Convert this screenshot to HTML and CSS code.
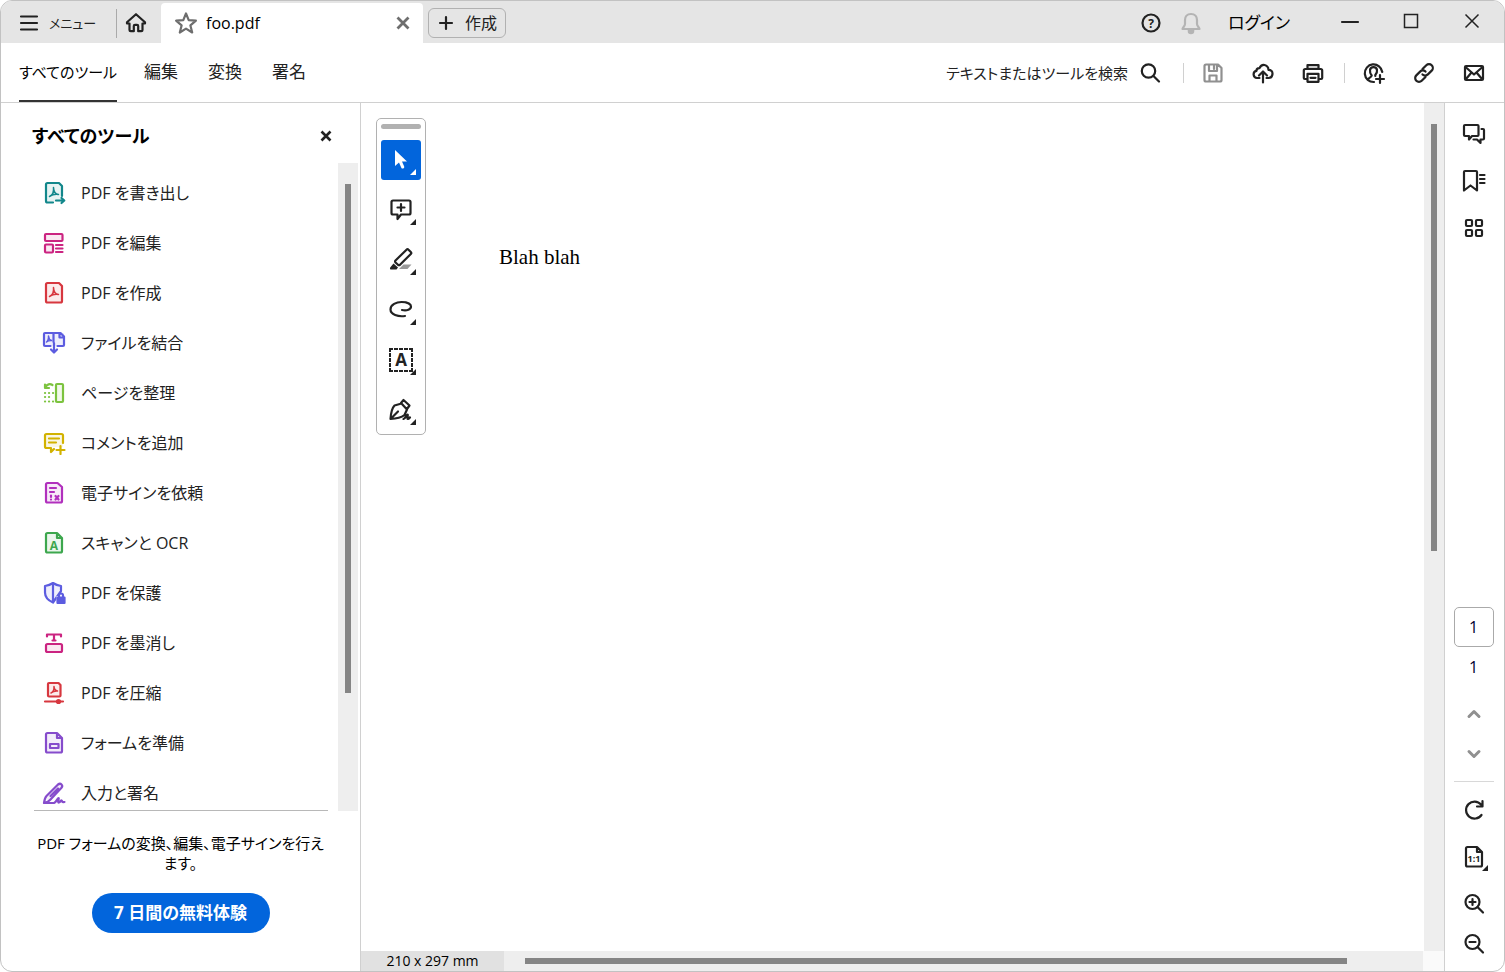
FILE: index.html
```html
<!DOCTYPE html>
<html lang="ja">
<head>
<meta charset="utf-8">
<title>foo.pdf</title>
<link rel="stylesheet" href="styles.css">
</head>
<body>
<div class="window">
  <header class="titlebar">
    <button class="menu-btn"><svg class="ico" viewBox="0 0 24 24"><path d="M4 5.500h16M4 12h16M4 18.500h16"/></svg>メニュー</button>
    <span class="tab-divider"></span>
    <button class="home-btn" aria-label="ホーム"><svg class="ico" viewBox="0 0 24 24"><path d="M12 3.200 3 11.200v1.300h2.500V19q0 1.200 1.200 1.200H9.800v-5.200q0-1.200 1.200-1.200h2q1.200 0 1.200 1.200v5.200h3.100q1.200 0 1.200-1.200v-6.500H21v-1.300z"/></svg></button>
    <div class="doc-tab">
      <svg class="ico star" viewBox="0 0 24 24"><path d="m12 2.500 2.700 6.700 7.200.5-5.500 4.700 1.800 7.100L12 17.600l-6.200 3.900 1.800-7.100-5.500-4.700 7.200-.5z"/></svg>
      <span class="doc-name">foo.pdf</span>
      <button aria-label="タブを閉じる"><svg class="ico tab-x" viewBox="0 0 24 24"><path d="m6.500 6.500 11 11m0-11-11 11"/></svg></button>
    </div>
    <button class="create-btn"><svg class="ico" viewBox="0 0 24 24"><path d="M12 6v12M6 12h12"/></svg>作成</button>
    <div class="title-right">
      <button aria-label="ヘルプ"><svg class="ico" viewBox="0 0 24 24"><circle cx="12" cy="12" r="8.500"/><text x="12" y="16.500" font-size="12">?</text></svg></button>
      <button aria-label="通知"><svg class="ico bell" viewBox="0 0 24 24"><path d="M12 3c-4 0-6 2.800-6 6v4c0 2-2 3-2.500 5h17c-.5-2-2.500-3-2.500-5V9c0-3.200-2-6-6-6z"/><path d="M9.800 19v1a2.200 2.200 0 0 0 4.400 0v-1z" class="fill"/></svg></button>
      <button class="login">ログイン</button>
    </div>
    <div class="win-controls">
      <button aria-label="最小化"><svg class="ico" viewBox="0 0 24 24"><path d="M4 13h16"/></svg></button>
      <button aria-label="最大化"><svg class="ico thin" viewBox="0 0 24 24"><path d="M5.500 5.500h13v13h-13z"/></svg></button>
      <button aria-label="閉じる"><svg class="ico thin" viewBox="0 0 24 24"><path d="m5.500 5.500 13 13m0-13-13 13"/></svg></button>
    </div>
  </header>

  <div class="toolbar">
    <nav class="modes">
      <button class="mode active">すべてのツール</button>
      <button class="mode">編集</button>
      <button class="mode">変換</button>
      <button class="mode">署名</button>
    </nav>
    <div class="actions">
      <button class="search">テキストまたはツールを検索<svg class="ico" viewBox="0 0 24 24"><circle cx="10.500" cy="10" r="6.700"/><path d="m15.500 15 5.500 5.500"/></svg></button>
      <span class="action-divider"></span>
      <button class="disabled" aria-label="保存" disabled><svg class="ico" viewBox="0 0 24 24"><path d="M5 3.500h12l3.500 3.500v12q0 1.500-1.500 1.500H5q-1.500 0-1.500-1.500V5q0-1.500 1.500-1.500zM8 4v6h8V4M8.500 20v-5.500h7V20M13 5v3"/></svg></button>
      <button aria-label="クラウドにアップロード"><svg class="ico" viewBox="0 0 24 24"><path d="M8.500 17H6a3.600 3.600 0 0 1-.6-7.100Q5.600 7 8.500 7.200 10 3.500 13.500 4q3.700.8 4 4.800 4.200.2 4 4.200Q21 17 17.500 17h-2M12 21.500V11M8 14.500l4-4 4 4"/></svg></button>
      <button aria-label="印刷"><svg class="ico" viewBox="0 0 24 24"><path class="shade" d="M7 4h10v4H7z"/><path d="M6.500 18H3.800q-1 0-1-1V9.500q0-1.500 1.500-1.500h15.400q1.500 0 1.500 1.500V17q0 1-1 1h-2.700M6.500 8V4h11v4M6.500 12.800h11v8h-11zM9.500 16.800h5"/></svg></button>
      <span class="action-divider"></span>
      <button aria-label="共有"><svg class="ico" viewBox="0 0 24 24"><path d="M20.300 11a8.800 8.800 0 1 0-8.300 10M6 18.500c.5-2 3.500-1.800 3.700-4C7 11 7.300 6.200 11.500 6.200S16 11 13.300 14v1M18 14v8M14 18h8"/></svg></button>
      <button aria-label="リンク"><svg class="ico" viewBox="0 0 24 24"><path d="m10.500 8 3.800-3.800a3.800 3.800 0 0 1 5.400 5.400l-3.800 3.800a3.800 3.800 0 0 1-5.400 0M13.500 16l-3.800 3.800a3.800 3.800 0 0 1-5.400-5.400l3.800-3.800a3.800 3.800 0 0 1 5.400 0"/></svg></button>
      <button aria-label="メール"><svg class="ico" viewBox="0 0 24 24"><path d="M4 5h16q1 0 1 1v12q0 1-1 1H4q-1 0-1-1V6q0-1 1-1zM3.500 6l8.500 7.500L20.500 6M4 18l5.500-6.500M20 18l-5.500-6.500"/></svg></button>
    </div>
  </div>

  <div class="workspace">
    <aside class="sidebar">
      <div class="side-head"><h2>すべてのツール</h2><button aria-label="パネルを閉じる"><svg class="ico panel-x" viewBox="0 0 24 24"><path d="m7.500 7.500 9 9m0-9-9 9"/></svg></button></div>
      <div class="side-scroll">
        <ul class="tools">
          <li><button class="teal"><svg class="ico" viewBox="0 0 24 24"><path class="tint" d="M4 2h13l3 3v16H4z"/><path d="M11 21.500H5.500Q4 21.500 4 20V3.500Q4 2 5.500 2H17l3 3v10M14 19.500h8M19.500 17l2.800 2.500-2.800 2.500"/><path class="fine" d="M11.500 6.500c.2 4 2 6.500 5 7M7.500 15.500c3-1.200 4.500-4 4-9M7.500 15.500c3-2 6-2.500 9-2"/></svg>PDF を書き出し</button></li>
          <li><button class="pink"><svg class="ico" viewBox="0 0 24 24"><path class="tint" d="M3 3h18v7H3zM3 13h8v9H3z"/><rect x="3" y="3" width="17.500" height="7" rx="1"/><rect x="3" y="13.500" width="8" height="8" rx="1"/><path d="M14 14h6.500M14 17.500h6.500M14 21h6.500"/></svg>PDF を編集</button></li>
          <li><button class="red"><svg class="ico" viewBox="0 0 24 24"><path class="tint" d="M4 2h13l3 3v16H4z"/><path d="M5.500 2H17l3 3v15q0 1.500-1.500 1.500h-13Q4 21.500 4 20V3.500Q4 2 5.500 2z"/><path class="fine" d="M11.500 6.500c.2 4 2 6.500 5 7M7.500 15.500c3-1.200 4.500-4 4-9M7.500 15.500c3-2 6-2.500 9-2"/></svg>PDF を作成</button></li>
          <li><button class="indigo"><svg class="ico" viewBox="0 0 24 24"><path class="tint" d="M2 2h20v13H2z"/><path d="M8.500 15H3q-1 0-1-1V3q0-1 1-1h8.500v9M15.500 15H21q1 0 1-1V5.500L18.500 2h-6M17.500 2.500v4H22M12 12v9M9 18.500l3 3 3-3"/><path class="fine" d="M6.500 5c.2 2.500 1.300 4 3 4.500M4.500 11c1.500-1 2.200-3 2-6M4.500 11c1.500-1.300 3-1.600 5-1.500"/></svg>ファイルを結合</button></li>
          <li><button class="lime"><svg class="ico" viewBox="0 0 24 24"><rect class="tint" x="14" y="3" width="7" height="18"/><rect x="14" y="3" width="7" height="18" rx="1"/><path d="M3 3.500V7h4M3 6.500c2-3.500 5-4 7.500-2.500"/><path class="dots" d="M3 12h8.100M3 16h4.100M3 20.500h8.100"/></svg>ページを整理</button></li>
          <li><button class="gold"><svg class="ico" viewBox="0 0 24 24"><path class="tint" d="M3 3h18v13H3z"/><path d="M12 18 9 21v-4H4.500Q3 17 3 15.500v-11Q3 3 4.500 3h15Q21 3 21 4.500V12M7 7.500h10M7 11.500h7M18.500 15v8M14.500 19h8"/></svg>コメントを追加</button></li>
          <li><button class="purple"><svg class="ico" viewBox="0 0 24 24"><path class="tint" d="M4 2h12l4 4v15H4z"/><path d="M5.500 2H15.500L20 6v14q0 1.500-1.500 1.500h-13Q4 21.500 4 20V3.500Q4 2 5.500 2zM8 7h6M8 11h4M9 14.500V16M9 18.500v.1M13.500 15l3 3.500m0-3.500-3 3.500"/></svg>電子サインを依頼</button></li>
          <li><button class="green"><svg class="ico" viewBox="0 0 24 24"><path class="tint" d="M4 2h11l5 5v14H4z"/><path d="M5.500 2H15l5 5v13q0 1.500-1.500 1.500h-13Q4 21.500 4 20V3.500Q4 2 5.500 2zM15 2v5h5"/><text x="12" y="18.500" font-size="12">A</text></svg>スキャンと OCR</button></li>
          <li><button class="indigo"><svg class="ico" viewBox="0 0 24 24"><path class="tint" d="m11 2 8 3v8l-8 8-8-8V5z"/><path d="M19 10V5Q14.500 4.500 11 2 7.500 4.500 3 5v6.500q0 6.500 8 10zM11 2v19.500"/><path class="halo" d="M14.500 15h9v8h-9z"/><path class="fill" d="M15.500 16.500h7v5.500h-7z"/><path d="M17 16v-1.500a2 2 0 0 1 4 0V16"/></svg>PDF を保護</button></li>
          <li><button class="pink"><svg class="ico" viewBox="0 0 24 24"><path class="tint" d="M4 13h16v8H4z"/><rect x="4" y="13" width="16" height="8" rx="1.500"/><path d="M5 5.500v-2h14v2M12 3.500V9.500M10.500 9.500h3"/></svg>PDF を墨消し</button></li>
          <li><button class="red"><svg class="ico" viewBox="0 0 24 24"><path class="tint" d="M6 1.500h12V16H6z"/><path d="M7 2h9.500l2 2v10.500q0 1-1 1H7q-1 0-1-1V3q0-1 1-1zM3 20.500h18"/><circle class="fill" cx="16.500" cy="20.500" r="1.500"/><path class="fine" d="M12 5.500c.2 2.500 1.300 4 3.500 4.500M9 12c2-1 3.200-3 3-6.500M9 12c2-1.700 4-2.200 6.500-2"/></svg>PDF を圧縮</button></li>
          <li><button class="violet"><svg class="ico" viewBox="0 0 24 24"><path class="tint" d="M4 2h11l5 5v14H4z"/><path d="M5.500 2H15l5 5v13q0 1.500-1.500 1.500h-13Q4 21.500 4 20V3.500Q4 2 5.500 2zM15 2v5h5M8 13h8.500v4H8z"/></svg>フォームを準備</button></li>
          <li><button class="violet"><svg class="ico" viewBox="0 0 24 24"><path class="tint" d="M3 19 17 3l3 3L9 18z"/><path d="M2 22c.5-4 1-5.500 2.500-7L16 3.500q2-1.500 3.500 0t0 3.300L8.500 18.500Q6.500 21 2 22zM8.500 15 16 7.500M2.500 22H12c2.500-1 3.500-5 4.500-5s-1.500 5 .5 4.500 1.500-2.500 2.500-2 0 2 3 1.500"/></svg>入力と署名</button></li>
        </ul>
        <div class="v-track side-track"><div class="thumb"></div></div>
      </div>
      <div class="side-foot">
        <p>PDF フォームの変換、編集、電子サインを行え<br>ます。</p>
        <button class="trial">7 日間の無料体験</button>
      </div>
    </aside>

    <main class="viewer">
      <div class="doc-row">
        <div class="page"><p>Blah blah</p></div>
        <div class="v-track doc-track"><div class="thumb"></div></div>
      </div>
      <div class="status-row">
        <span class="page-size">210 x 297 mm</span>
        <div class="h-track"><div class="thumb"></div></div>
        <span class="corner"></span>
      </div>
      <div class="palette">
        <span class="grip"></span>
        <button class="selected flyout" aria-label="選択"><svg class="ico" viewBox="0 0 24 24"><path class="cursor" d="M6 2v16l4-3.500 2.300 5.200q.7 1.300 2 .7t.9-2L13 13.500h5z"/></svg></button>
        <button class="flyout" aria-label="コメント"><svg class="ico" viewBox="0 0 24 24"><path d="M4 2.500h16q1.500 0 1.500 1.500v11q0 1.500-1.500 1.500h-8L8.500 21v-4.500H4q-1.500 0-1.500-1.500V4Q2.500 2.500 4 2.500zM12 6v7M8.500 9.500h7"/></svg></button>
        <button class="flyout" aria-label="ハイライト"><svg class="ico" viewBox="0 0 24 24"><path class="grey-fill" d="M14.500 16.500H22.500l-4 4.500H10z"/><path d="M6.500 12.500 17.500 1.700q1-1 2 0L21.800 4q1 1 0 2L11 16.800q-1 .8-2 0L6.500 14.500q-.8-1 0-2z"/><path class="cursor" d="M4.500 15.500 9 19.500 7.500 21.500h-6q-1-.5-.3-2z"/></svg></button>
        <button class="flyout" aria-label="描画"><svg class="ico" viewBox="0 0 24 24"><path d="M13 12c5 1 9-.5 9-3.500S17.500 4 12.500 4 1.500 6.500 1.500 11.500 9 19 16 18"/></svg></button>
        <button class="flyout" aria-label="テキスト選択"><svg class="ico" viewBox="0 0 24 24"><path class="dash" d="M0 1h24M0 23h24M1 0v24M23 0v24"/><text x="12" y="17.500" font-size="17">A</text></svg></button>
        <button class="flyout" aria-label="署名"><svg class="ico" viewBox="0 0 24 24"><path d="M1.500 21C2 14 3.500 9.500 5.500 7.500L12.500 5.500l5.500 6L15.500 17Q11 20.500 1.500 21zM2 20.500 9 13.500M12 5l2.500-3 6 5.500-2.500 3.500M14.500 21c2-.5 3-4.500 4-4.500s-1 4.500.5 4.500 1-2 2-1.500"/></svg></button>
      </div>
    </main>

    <aside class="rail">
      <div class="rail-group">
        <button aria-label="コメント"><svg class="ico" viewBox="0 0 24 24"><path d="M3 3h12.500q1 0 1 1v9q0 1-1 1H10l-3 3.500V14H3q-1 0-1-1V4q0-1 1-1zM19.500 7H21q1 0 1 1v8.500q0 1-1 1h-2.500V21L15 17.500h-3.500"/></svg></button>
        <button aria-label="しおり"><svg class="ico" viewBox="0 0 24 24"><path d="M3 2h11q1 0 1 1v18.500l-6.500-5-6.500 5V3q0-1 1-1zM18 6h4.500M18 10h4.500M18 14h4.500"/></svg></button>
        <button aria-label="サムネール"><svg class="ico" viewBox="0 0 24 24"><rect x="4" y="4" width="6" height="6" rx="1"/><rect x="14" y="4" width="6" height="6" rx="1"/><rect x="4" y="14" width="6" height="6" rx="1"/><rect x="14" y="14" width="6" height="6" rx="1"/></svg></button>
      </div>
      <div class="rail-bottom">
        <input class="page-no" type="text" value="1" aria-label="ページ番号">
        <span class="page-total">1</span>
        <button class="chev" aria-label="前のページ"><svg class="ico" viewBox="0 0 24 24"><path d="m7 14.500 5-5 5 5"/></svg></button>
        <button class="chev" aria-label="次のページ"><svg class="ico" viewBox="0 0 24 24"><path d="m7 9.500 5 5 5-5"/></svg></button>
        <span class="rail-line"></span>
        <div class="view-tools">
          <button aria-label="回転"><svg class="ico" viewBox="0 0 24 24"><path d="M19.500 17A8.500 8.500 0 1 1 19 6.500M20.500 3v5.500H15"/></svg></button>
          <button class="flyout" aria-label="実際のサイズ"><svg class="ico" viewBox="0 0 24 24"><path d="M5.500 2H15l5 5v13q0 1.500-1.500 1.500h-13Q4 21.500 4 20V3.500Q4 2 5.500 2zM15 2v5h5"/><text x="12" y="17" font-size="9">1:1</text></svg></button>
          <button aria-label="拡大"><svg class="ico" viewBox="0 0 24 24"><circle cx="10.500" cy="10" r="7"/><path d="m15.500 15 5.500 5.500M7.500 10h6M10.500 7v6"/></svg></button>
          <button class="last" aria-label="縮小"><svg class="ico" viewBox="0 0 24 24"><circle cx="10.500" cy="10" r="7"/><path d="m15.500 15 5.500 5.500M7.500 10h6"/></svg></button>
        </div>
      </div>
    </aside>
  </div>
</div>
</body>
</html>
```

FILE: styles.css
```css
* { box-sizing: border-box; }

body {
  margin: 0;
  background: #fff;
  color: #222;
  font: 16px/24px "Open Sans", "Noto Sans CJK JP", sans-serif;
  font-feature-settings: "palt";
}

button {
  display: flex;
  align-items: center;
  justify-content: center;
  flex: none;
  padding: 0;
  border: 0;
  background: none;
  color: inherit;
  font: inherit;
  font-feature-settings: inherit;
  white-space: nowrap;
}

p, h2, ul { margin: 0; padding: 0; }

.ico {
  flex: none;
  width: 24px;
  height: 24px;
  fill: none;
  stroke: currentColor;
  stroke-width: 2.2;
  stroke-linejoin: round;
  stroke-linecap: round;
}
.ico text {
  fill: currentColor;
  stroke: none;
  font-family: "Open Sans", sans-serif;
  font-weight: 700;
  text-anchor: middle;
}
.ico .tint { fill: currentColor; fill-opacity: 0.1; stroke: none; }
.ico .fine { stroke-width: 1.5; }
.ico .fill { fill: currentColor; }
.ico .cursor { fill: currentColor; stroke: none; }
.ico .halo { fill: #fff; stroke: none; }
.ico .shade { fill: #ccc; stroke: none; }
.ico .grey-fill { fill: #999; stroke: none; }
.ico .dots { stroke-dasharray: 0.1 3.9; }
.ico .dash { stroke-width: 2; stroke-dasharray: 4 1; stroke-linecap: butt; }
.ico.thin { stroke-width: 1.5; stroke-linecap: butt; stroke-linejoin: miter; }

.window {
  display: flex;
  flex-direction: column;
  height: 100vh;
  overflow: hidden;
  border: 1px solid #c2c2c2;
  border-radius: 12px;
}

/* Title bar */
.titlebar {
  display: flex;
  flex: none;
  align-items: center;
  height: 42px;
  padding: 2px 0 0 16px;
  background: #e5e5e5;
}
.menu-btn { gap: 8px; width: 82px; justify-content: flex-start; font-size: 13px; }
.tab-divider { width: 1px; height: 29px; margin: 0 7px 0 17px; background: #aaa; }
.home-btn { width: 24px; }
.doc-tab {
  display: flex;
  align-items: center;
  align-self: flex-end;
  width: 262px;
  height: 40px;
  margin-left: 13px;
  padding: 0 8px 0 13px;
  border-radius: 4px 4px 0 0;
  background: #fff;
}
.star { color: #6e6e6e; }
.tab-x { color: #6e6e6e; stroke-width: 2.8; stroke-linecap: butt; }
.doc-name { flex: 1; padding-left: 8px; color: #000; font-size: 16px; }
.create-btn {
  gap: 7px;
  width: 78px;
  height: 30px;
  margin-left: 5px;
  padding-right: 3px;
  border: 1px solid #b1b1b1;
  border-radius: 6px;
}
.title-right { display: flex; align-items: center; gap: 16px; margin-left: auto; }
.bell { color: #b4b4b4; }
.login { width: 60px; margin-left: 10px; color: #000; font-size: 17px; }
.win-controls { display: flex; gap: 37px; margin: 0 20px 0 49px; padding-bottom: 4px; }

/* Mode tabs and document actions */
.toolbar {
  display: flex;
  flex: none;
  justify-content: space-between;
  height: 60px;
  padding: 0 18px;
  border-bottom: 1px solid #d0d0d0;
}
.modes { display: flex; gap: 30px; }
.mode { border-bottom: 2px solid transparent; font-size: 17px; }
.mode.active { margin-right: -3px; border-color: #333; color: #000; font-size: 15px; }
.actions { display: flex; align-items: center; gap: 26px; }
.search { gap: 10px; margin-right: 2px; font-size: 15px; }
.action-divider { width: 1px; height: 20px; margin: 0 -9px 0 -7px; background: #d0d0d0; }
.disabled { color: #909090; }

/* Panels */
.workspace { display: flex; flex: 1; min-height: 0; }

.sidebar {
  display: flex;
  flex: none;
  flex-direction: column;
  width: 360px;
  border-right: 1px solid #d0d0d0;
}
.side-head {
  display: flex;
  flex: none;
  align-items: center;
  justify-content: space-between;
  height: 60px;
  padding: 5px 22px 0 31px;
}
.side-head h2 { color: #000; font-size: 18px; line-height: 24px; }
.panel-x { stroke-width: 2.6; stroke-linecap: butt; }
.side-scroll { display: flex; flex: 1; min-height: 0; }
.tools {
  flex: 1;
  overflow: hidden;
  margin: 0 10px 0 33px;
  padding-top: 5px;
  border-bottom: 1px solid #b8b8b8;
  list-style: none;
}
.tools button { gap: 15px; height: 50px; margin-left: 8px; }
.teal .ico { color: #12878b; }
.pink .ico { color: #cb2481; }
.red .ico { color: #d7373f; }
.indigo .ico { color: #5c5ce0; }
.lime .ico { color: #7cc33f; }
.gold .ico { color: #d2b200; }
.purple .ico { color: #b130bd; }
.green .ico { color: #3da74e; }
.violet .ico { color: #864ccc; }

.v-track { flex: none; width: 20px; padding: 21px 7px; background: #eee; }
.thumb { background: #858585; }
.side-track { margin-right: 2px; }
.side-track .thumb { width: 6px; height: 84%; }
.doc-track .thumb { width: 6px; height: 53%; }

.side-foot {
  display: flex;
  flex: none;
  flex-direction: column;
  align-items: center;
  gap: 20px;
  padding: 22px 16px 38px;
}
.side-foot p { color: #000; font-size: 15px; line-height: 20px; text-align: center; white-space: nowrap; }
.trial {
  height: 40px;
  min-width: 178px;
  padding: 0 20px;
  border-radius: 20px;
  background: #0265dc;
  color: #fff;
  font-size: 17px;
  font-weight: 700;
}

/* Document */
.viewer { position: relative; display: flex; flex: 1; flex-direction: column; min-width: 0; }
.doc-row { display: flex; flex: 1; min-height: 0; }
.page { flex: 1; padding: 142px 138px; color: #000; font: 21px/24px "Liberation Serif", serif; }
.status-row { display: flex; flex: none; height: 20px; background: #eee; }
.page-size {
  width: 143px;
  background: #e1e1e1;
  color: #000;
  font-size: 14px;
  line-height: 20px;
  text-align: center;
}
.h-track { flex: 1; padding: 7px 76px 7px 21px; }
.h-track .thumb { height: 6px; }
.corner { width: 21px; background: #fafafa; }

.palette {
  position: absolute;
  top: 15px;
  left: 15px;
  display: flex;
  flex-direction: column;
  align-items: center;
  gap: 10px;
  width: 50px;
  padding: 5px 4px 4px;
  border: 1px solid #b1b1b1;
  border-radius: 5px;
  background: #fff;
}
.grip { width: 40px; height: 5px; margin-bottom: 1px; border-radius: 3px; background: #b1b1b1; }
.palette button { width: 40px; height: 40px; border-radius: 3px; }
.palette .selected { background: #0265dc; color: #fff; }
.flyout { position: relative; }
.flyout::after {
  content: "";
  position: absolute;
  right: 5px;
  bottom: 5px;
  border: 3px solid transparent;
  border-right-color: currentColor;
  border-bottom-color: currentColor;
}

/* Right rail */
.rail {
  display: flex;
  flex: none;
  flex-direction: column;
  justify-content: space-between;
  width: 60px;
  padding-right: 2px;
  border-left: 1px solid #d0d0d0;
}
.rail-group { display: flex; flex-direction: column; align-items: center; gap: 23px; padding-top: 19px; }
.rail-bottom { display: flex; flex-direction: column; align-items: center; padding-bottom: 15px; }
.page-no {
  width: 40px;
  height: 40px;
  padding: 0;
  border: 1px solid #aaa;
  border-radius: 5px;
  background: #fff;
  color: #003;
  font: inherit;
  text-align: center;
}
.page-total { height: 47px; padding-top: 8px; color: #003; }
.chev { width: 40px; height: 40px; color: #909090; }
.chev .ico { stroke-width: 3; }
.rail-line { width: 40px; height: 1px; margin: 7px 0 16px; background: #d8d8d8; }
.view-tools { display: flex; flex-direction: column; gap: 23px; }
.view-tools .last { margin-top: -7px; }
.view-tools .flyout::after { right: -2px; bottom: -2px; }
```
